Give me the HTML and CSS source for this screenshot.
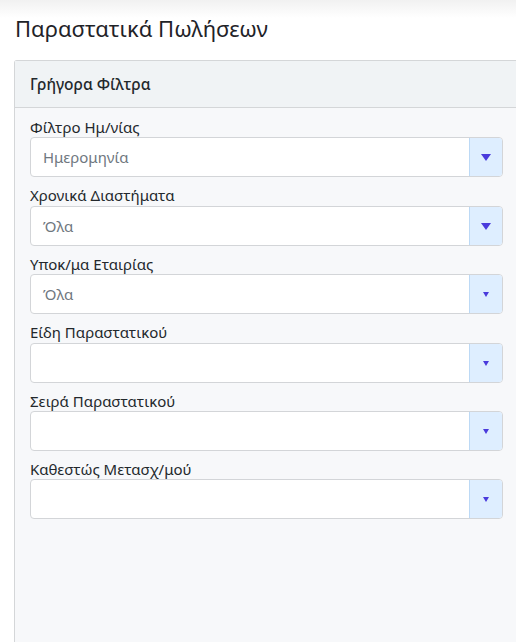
FILE: index.html
```html
<!DOCTYPE html>
<html lang="el">
<head>
<meta charset="utf-8">
<title>Παραστατικά Πωλήσεων</title>
<link rel="stylesheet" href="styles.css">
</head>
<body>
<h1 class="page-title">Παραστατικά Πωλήσεων</h1>
<section class="card">
  <header class="card-header">Γρήγορα Φίλτρα</header>
  <div class="card-body">
    <div class="field">
      <label class="field-label">Φίλτρο Ημ/νίας</label>
      <div class="select">
        <span class="select-value">Ημερομηνία</span>
        <span class="select-btn"><span class="caret caret-lg"></span></span>
      </div>
    </div>
    <div class="field">
      <label class="field-label">Χρονικά Διαστήματα</label>
      <div class="select">
        <span class="select-value">Όλα</span>
        <span class="select-btn"><span class="caret caret-lg"></span></span>
      </div>
    </div>
    <div class="field">
      <label class="field-label">Υποκ/μα Εταιρίας</label>
      <div class="select">
        <span class="select-value">Όλα</span>
        <span class="select-btn"><span class="caret"></span></span>
      </div>
    </div>
    <div class="field">
      <label class="field-label">Είδη Παραστατικού</label>
      <div class="select">
        <span class="select-value"></span>
        <span class="select-btn"><span class="caret"></span></span>
      </div>
    </div>
    <div class="field">
      <label class="field-label">Σειρά Παραστατικού</label>
      <div class="select">
        <span class="select-value"></span>
        <span class="select-btn"><span class="caret"></span></span>
      </div>
    </div>
    <div class="field">
      <label class="field-label">Καθεστώς Μετασχ/μού</label>
      <div class="select">
        <span class="select-value"></span>
        <span class="select-btn"><span class="caret"></span></span>
      </div>
    </div>
  </div>
</section>
</body>
</html>
```

FILE: styles.css
```css
html, body {
  overflow: hidden;
}
body {
  margin: 0;
  padding: 0 0 0 14px;
  height: 642px;
  box-sizing: border-box;
  font-family: "Noto Sans", "Open Sans", sans-serif;
  color: #212529;
  background: linear-gradient(#f1f1f1, #ffffff 18px) no-repeat, #ffffff;
  display: flex;
  flex-direction: column;
}
.page-title {
  margin: 12px 0 0 1px;
  font-size: 22px;
  line-height: 32px;
  font-weight: 400;
  color: #1f2328;
  height: 48px;
}
.card {
  width: 505px;
  flex: 1;
  box-sizing: border-box;
  border: 1px solid #d4d6d8;
  border-bottom: none;
  border-radius: 3px 3px 0 0;
  background: #f7f8fa;
}
.card-header {
  height: 47px;
  box-sizing: border-box;
  padding: 0 15px;
  display: flex;
  align-items: center;
  background: #f0f3f5;
  border-bottom: 1px solid #d4d6d8;
  font-size: 15.5px;
  font-weight: 500;
  color: #23282c;
}
.card-body {
  padding: 9px 15px 0;
  display: flex;
  flex-direction: column;
  gap: 8px;
}
.field {
  display: flex;
  flex-direction: column;
}
.field-label {
  font-size: 15px;
  line-height: 20.4px;
  color: #23282c;
}
.select {
  height: 40px;
  box-sizing: border-box;
  border: 1px solid #d3d5d8;
  border-radius: 4px;
  background: #ffffff;
  display: flex;
  overflow: hidden;
}
.select-value {
  flex: 1;
  padding-left: 12px;
  display: flex;
  align-items: center;
  font-size: 15px;
  color: #6f7780;
}
.select-btn {
  width: 32px;
  background: #deeeff;
  border-left: 1px solid #bcd9f5;
  display: flex;
  align-items: center;
  justify-content: center;
}
.caret {
  width: 0;
  height: 0;
  border-left: 3.5px solid transparent;
  border-right: 3.5px solid transparent;
  border-top: 5px solid #4a3bdc;
  margin-top: 1px;
}
.caret-lg {
  border-left-width: 5px;
  border-right-width: 5px;
  border-top-width: 7px;
}
```
